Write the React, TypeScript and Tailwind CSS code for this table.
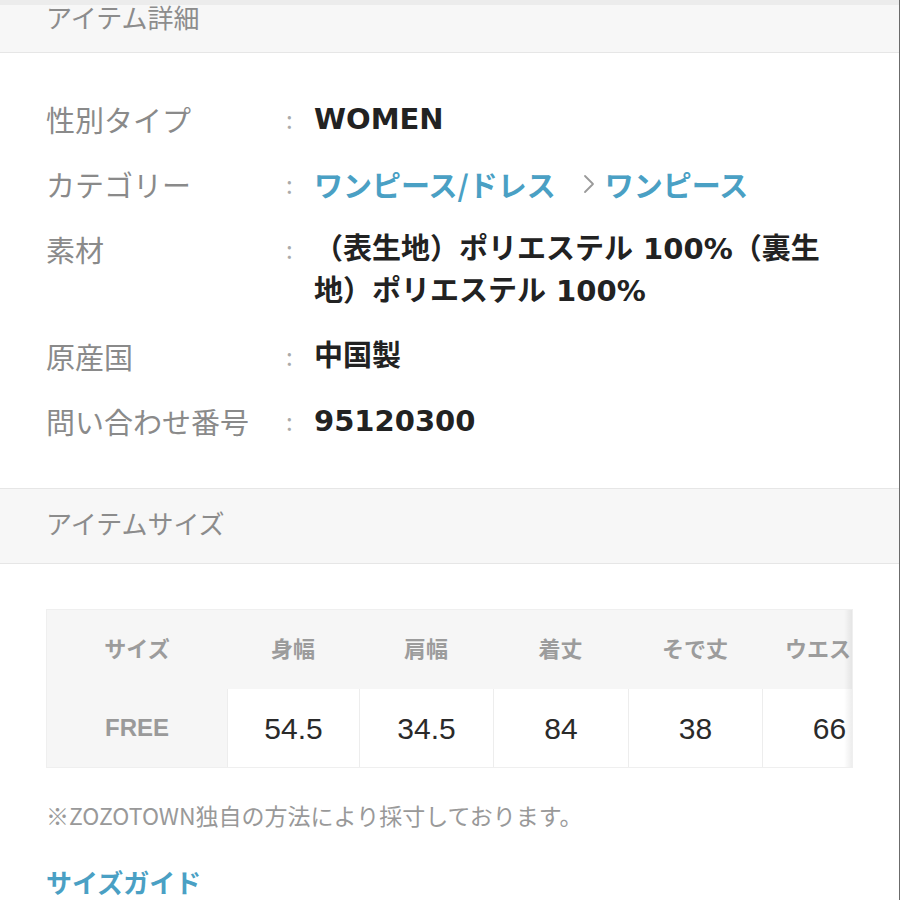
import React from "react";

function Colon() {
  return <div className="w-[30px] shrink-0 pl-[2px] text-[24px] text-[#aaaaaa]">:</div>;
}

const val = "font-bold text-[#222] font-['DejaVu_Sans','Noto_Sans_CJK_JP',sans-serif]";

export default function App() {
  const cols = [
    { h: "身幅", v: "54.5", w: "w-[132px]" },
    { h: "肩幅", v: "34.5", w: "w-[134px]" },
    { h: "着丈", v: "84", w: "w-[135px]" },
    { h: "そで丈", v: "38", w: "w-[134px]" },
    { h: "ウエスト", v: "66", w: "w-[134px]" },
  ];
  return (
    <div className="relative w-[900px] h-[900px] overflow-hidden bg-white font-['Noto_Sans_CJK_JP','Noto_Sans',sans-serif]">
      <div className="absolute right-0 top-0 h-full w-[1px] bg-[#6b6b6b]" />
      {/* header 1 */}
      <div className="box-border h-[53px] border-t-[5px] border-b border-t-[#ececec] border-b-[#e6e6e6] bg-[#f7f7f7] px-[46px]">
        <div className="text-[26px] leading-[24px] text-[#8c8c8c]">アイテム詳細</div>
      </div>

      {/* details */}
      <div className="px-[46px] pt-[45px] pb-[23px] text-[29px] leading-[42px]">
        <div className="mb-[23px] flex">
          <div className="w-[238px] shrink-0 text-[#8a8a8a]">性別タイプ</div>
          <Colon />
          <div className={val}>WOMEN</div>
        </div>
        <div className="mb-[23px] flex">
          <div className="w-[238px] shrink-0 text-[#8a8a8a]">カテゴリー</div>
          <Colon />
          <div className="flex items-center font-bold text-[#4aa0c4]">
            <span>ワンピース/ドレス</span>
            <svg className="ml-[27px] mr-[10px]" width="12" height="20" viewBox="0 0 12 20" fill="none">
              <polyline points="2,2 10,10 2,18" stroke="#9a9a9a" strokeWidth="1.8" strokeLinecap="round" strokeLinejoin="round" />
            </svg>
            <span>ワンピース</span>
          </div>
        </div>
        <div className="mb-[23px] flex">
          <div className="w-[238px] shrink-0 text-[#8a8a8a]">素材</div>
          <Colon />
          <div className={val}>
            <div>（表生地）ポリエステル 100%（裏生</div>
            <div>地）ポリエステル 100%</div>
          </div>
        </div>
        <div className="mb-[23px] flex">
          <div className="w-[238px] shrink-0 text-[#8a8a8a]">原産国</div>
          <Colon />
          <div className={val}>中国製</div>
        </div>
        <div className="mb-[23px] flex">
          <div className="w-[238px] shrink-0 text-[#8a8a8a]">問い合わせ番号</div>
          <Colon />
          <div className={val}>95120300</div>
        </div>
      </div>

      {/* header 2 */}
      <div className="box-border flex h-[76px] items-center border-y border-[#e6e6e6] bg-[#f7f7f7] px-[46px] pb-[6px]">
        <div className="text-[26px] leading-[30px] text-[#8c8c8c]">アイテムサイズ</div>
      </div>

      {/* table */}
      <div className="relative mx-[46px] mt-[45px] w-[807px] overflow-hidden border border-[#efefef] bg-[#f6f6f6]">
        <div className="flex w-max">
          <div className="flex h-[79px] w-[180px] shrink-0 items-center justify-center pb-[5px] text-[22px] font-bold text-[#9c9c9c]">サイズ</div>
          {cols.map((c) => (
            <div key={c.h} className={`${c.w} flex h-[79px] shrink-0 items-center justify-center pb-[5px] text-[22px] font-bold text-[#9c9c9c]`}>
              {c.h}
            </div>
          ))}
        </div>
        <div className="flex w-max">
          <div className="flex h-[78px] w-[180px] shrink-0 items-center justify-center text-[24px] font-bold text-[#9a9a9a] font-['Liberation_Sans',sans-serif]">FREE</div>
          {cols.map((c) => (
            <div key={c.h} className={`${c.w} box-border flex h-[78px] shrink-0 items-center justify-center border-l border-[#ededed] bg-white text-[30px] text-[#2a2a2a] font-['Liberation_Sans',sans-serif]`}>
              {c.v}
            </div>
          ))}
        </div>
        <div className="pointer-events-none absolute right-0 top-0 h-full w-[8px] bg-gradient-to-r from-transparent to-[rgba(0,0,0,0.07)]" />
      </div>

      <div className="mt-[31px] px-[46px] text-[23px] leading-[32px] text-[#999]">※ZOZOTOWN独自の方法により採寸しております。</div>
      <div className="mt-[35px] px-[46px] text-[26px] font-bold leading-[32px] text-[#4aa0c4]">サイズガイド</div>
    </div>
  );
}
